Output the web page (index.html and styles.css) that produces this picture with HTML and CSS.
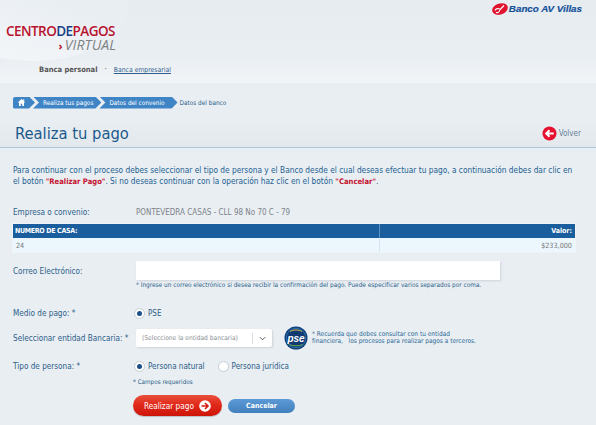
FILE: index.html
```html
<!DOCTYPE html>
<html lang="es">
<head>
<meta charset="utf-8">
<title>Realiza tu pago</title>
<link rel="stylesheet" href="styles.css">
</head>
<body>
<header class="top">
  <div class="swoosh"></div>
  <div class="brand-row">
    <div class="logo">
      <div class="logo-main">CENTRO<span class="logo-de">DE</span>PAGOS</div>
      <div class="logo-sub"><span class="logo-arrow">›</span>VIRTUAL</div>
    </div>
    <div class="bank">
      <svg class="bank-icon" viewBox="0 0 16 12" width="16" height="12"><ellipse cx="8" cy="6" rx="8" ry="5.4" fill="#e1122d" transform="rotate(-18 8 6)"/><path d="M3 7.5c1-2 3.500-2.500 4.500-1.500M4 9.500c2 .5 3.500-.5 4-3l4-4" fill="none" stroke="#fff" stroke-width="1.200"/></svg>
      <span>Banco AV Villas</span>
    </div>
  </div>
  <nav class="nav"><b>Banca personal</b><span class="nav-dot">·</span><a href="#">Banca empresarial</a></nav>
</header>
<main class="page">
  <div class="crumbs">
    <span class="crumb crumb-home"><svg viewBox="0 0 10 10" width="9" height="9"><path d="M5 1 .8 5h1.400v4h2V6.500h1.600V9h2V5h1.400L8 3.800V1.500H7v1.300z" fill="#fff"/></svg></span>
    <span class="crumb">Realiza tus pagos</span>
    <span class="crumb crumb-last">Datos del convenio</span>
    <span class="crumb-text">Datos del banco</span>
  </div>
  <div class="title-row">
    <h1>Realiza tu pago</h1>
    <a class="back" href="#">
      <svg viewBox="0 0 16 16" width="15" height="15"><circle cx="8" cy="8" r="7.500" fill="#e5112e"/><path d="M12.500 8H5M8 4.500 4.500 8 8 11.500" fill="none" stroke="#fff" stroke-width="2.200"/></svg>
      <span>Volver</span>
    </a>
  </div>
  <p class="intro">Para continuar con el proceso debes seleccionar el tipo de persona y el Banco desde el cual deseas efectuar tu pago, a continuación debes dar clic en el botón <b>"Realizar Pago"</b>. Si no deseas continuar con la operación haz clic en el botón <b>"Cancelar"</b>.</p>
  <div class="row row-company"><label class="lbl">Empresa o convenio:</label><span class="val">PONTEVEDRA CASAS - CLL 98 No 70 C - 79</span></div>
  <div class="tbl">
    <div class="th th-l">NUMERO DE CASA:</div><div class="th th-r">Valor:</div>
    <div class="td">24</div><div class="td td-r">$233,000</div>
  </div>
  <div class="row row-mail">
    <label class="lbl">Correo Electrónico:</label>
    <div class="mail-col">
      <div class="input"></div>
      <div class="hint">* Ingrese un correo electrónico si desea recibir la confirmación del pago. Puede especificar varios separados por coma.</div>
    </div>
  </div>
  <div class="row row-medio"><label class="lbl">Medio de pago: *</label><span class="radio on"></span><span class="opt">PSE</span></div>
  <div class="row row-bank">
    <label class="lbl">Seleccionar entidad Bancaria: *</label>
    <div class="select"><span class="sel-text">(Seleccione la entidad bancaria)</span><span class="sel-arrow"><svg viewBox="0 0 8 5" width="7" height="5"><path d="M1 1l3 3 3-3" fill="none" stroke="#444" stroke-width="1"/></svg></span></div>
    <svg class="pse" viewBox="0 0 24 24" width="24" height="24"><circle cx="12" cy="12" r="11.500" fill="#0e3f7a"/><circle cx="12" cy="12" r="9.800" fill="#123a72" stroke="#2f7fb5" stroke-width=".8"/><path d="M6 5.500c3-2 9-2 12 0" fill="none" stroke="#e6c44a" stroke-width="1"/><path d="M5.500 18.500c3.500 1.800 9.500 1.800 13 0" fill="none" stroke="#6fb24a" stroke-width="1"/><text x="12" y="15.500" text-anchor="middle" class="pse-text">pse</text></svg>
    <div class="note">* Recuerda que debes consultar con tu entidad<br>financiera, &nbsp; los procesos para realizar pagos a terceros.</div>
  </div>
  <div class="row row-tipo"><label class="lbl">Tipo de persona: *</label><span class="radio on"></span><span class="opt opt-gap">Persona natural</span><span class="radio"></span><span class="opt">Persona jurídica</span></div>
  <div class="req">* Campos requeridos</div>
  <div class="btns">
    <a class="btn-red" href="#">Realizar pago<svg viewBox="0 0 12 12" width="12" height="12"><circle cx="6" cy="6" r="5.800" fill="#fff"/><path d="M2.500 6h6M6 3l3 3-3 3" fill="none" stroke="#d81e14" stroke-width="1.700"/></svg></a>
    <a class="btn-blue" href="#">Cancelar</a>
  </div>
</main>
</body>
</html>
```
FILE: styles.css
```css
html, body { margin: 0; padding: 0; }
body {
  width: 596px; height: 425px; overflow: hidden;
  background: #e9eef3;
  font-family: "DejaVu Sans Condensed", "DejaVu Sans", Verdana, sans-serif;
  font-stretch: condensed;
  color: #2c5f8a;
  font-size: 8px;
}
a { text-decoration: none; color: inherit; }
.top {
  position: relative; height: 82px; overflow: hidden;
  background: linear-gradient(180deg, #e7ecf1 0%, #e9eef2 70%, #f1f4f7 100%);
  border-bottom: 1px solid #f3f5f8;
}
.swoosh {
  position: absolute; left: -60px; top: -42px; width: 188px; height: 103px;
  border-radius: 50%;
  background: linear-gradient(200deg, #e9eef3 40%, #f6f8fa 100%);
}
.brand-row { position: relative; display: flex; justify-content: space-between; align-items: flex-start; padding: 3px 14px 0 6px; height: 47px; }
.logo { margin-top: 22px; width: 110px; }
.logo-main { font: 600 13.500px/13px "Open Sans", sans-serif; font-stretch: normal; color: #b8122e; letter-spacing: -.55px; white-space: nowrap; }
.logo-de { color: #173f84; }
.logo-sub { font: italic 400 14px/14px "Open Sans", sans-serif; font-stretch: normal; color: #7d8285; text-align: right; letter-spacing: .1px; white-space: nowrap; }
.logo-arrow { color: #b8122e; font-style: normal; font-weight: 700; margin-right: 2px; font-size: 11px; }
.bank { display: flex; align-items: center; gap: 1px; font: italic 700 9.800px/12px "Liberation Sans", sans-serif; font-stretch: normal; color: #16529a; -webkit-text-stroke: .2px #16529a; }
.bank-icon { display: block; }
.nav { position: relative; display: flex; align-items: center; padding: 15px 0 0 39px; font-size: 8px; line-height: 10px; color: #555; white-space: nowrap; }
.nav b { font-weight: 700; font-size: 7.500px; }
.nav-dot { margin: 0 7px 0 7px; }
.nav a { color: #2f5f90; text-decoration: underline; font-size: 6.800px; }
.page { padding: 13px 21px 0 13px; }
.crumbs { display: flex; align-items: center; height: 13px; color: #fff; font-size: 6.400px; white-space: nowrap; }
.crumb {
  height: 12px; line-height: 10px; background: #3f85c6;
  display: flex; align-items: center; padding: 0 8px 0 10px;
  margin-right: -2px;
  clip-path: polygon(0 0, calc(100% - 6px) 0, 100% 50%, calc(100% - 6px) 100%, 0 100%, 6px 50%);
}
.crumb-home { clip-path: polygon(0 0, calc(100% - 6px) 0, 100% 50%, calc(100% - 6px) 100%, 0 100%); border-radius: 2px 0 0 2px; padding: 0 9px 0 4px; }
.crumb-last { padding-right: 13px; }
.crumb-text { color: #2c5f8a; margin-left: 4px; }
.title-row { display: flex; justify-content: space-between; align-items: center; height: 27px; margin: 11px -21px 0 -13px; padding: 0 15px 0 15px; border-bottom: 1px solid #a9c6dd; background: linear-gradient(180deg, #e9eef3, #e3e8ed); }
h1 { margin: 0; font: 400 16.400px/22px "DejaVu Sans Condensed", "DejaVu Sans", sans-serif; font-stretch: condensed; color: #1c5a8c; }
.back { display: flex; align-items: center; gap: 2px; font-size: 8px; color: #6a8096; }
.intro { margin: 17px 0 0; font-size: 8.250px; line-height: 10.500px; color: #235f90; width: 563px; }
.intro b { color: #c5122f; font-size: 7.600px; }
.row { display: flex; align-items: center; white-space: nowrap; }
.lbl { width: 121px; margin-right: 2px; flex: none; font-size: 8.150px; color: #2c6088; }
.val { color: #7c8287; font-size: 8px; }
.row-company { margin-top: 20px; height: 10px; }
.tbl { margin-top: 7px; width: 562px; display: grid; grid-template-columns: 367px 195px; grid-template-rows: 14px 14px; font-size: 7px; outline: 1px solid #f1f4f7; }
.th { background: #1b5e9d; color: #fff; font-weight: 700; display: flex; align-items: center; padding: 0 3px; }
.th-l { border-right: 1px solid #5a93c4; padding-left: 2px; letter-spacing: -.3px; }
.th-r { justify-content: flex-end; }
.td { background: #ebf6fd; color: #777; display: flex; align-items: center; padding: 0 3px; font-size: 7.200px; }
.td:nth-child(3) { border-right: 1px solid #d5e6f2; }
.td-r { justify-content: flex-end; }
.row-mail { margin-top: 9px; align-items: flex-start; }
.row-mail .lbl { margin-top: 5px; }
.input { width: 364px; height: 19px; background: #fff; box-shadow: 1px 1px 2px #cdd3d9; }
.hint { font-size: 6.450px; line-height: 8px; margin-top: 1px; color: #2c5f8a; }
.row-medio { margin-top: 18px; height: 12px; }
.radio { width: 9px; height: 9px; margin: 0 3px 0 -2px; flex: none; border-radius: 50%; background: #fff; border: 1px solid #c4ccd4; position: relative; }
.radio.on::after { content: ""; position: absolute; left: 2px; top: 2px; width: 5px; height: 5px; border-radius: 50%; background: #1b4f8a; }
.opt { font-size: 8px; color: #2c6088; }
.opt-gap { margin-right: 15px; }
.row-bank { margin-top: 7px; height: 24px; }
.select { width: 136px; height: 18px; flex: none; background: #fff; display: flex; align-items: center; box-shadow: 1px 1px 2px #cdd3d9; border-radius: 2px; }
.sel-text { width: 116px; padding-left: 6px; font-size: 6.600px; color: #8a8f94; box-sizing: border-box; overflow: hidden; }
.sel-arrow { flex: 1; height: 11px; border-left: 1px solid #dcdfe3; display: flex; align-items: center; justify-content: center; }
.pse { margin-left: 12px; flex: none; }
.pse-text { font: italic 700 10px "Liberation Sans", sans-serif; font-stretch: normal; fill: #fff; }
.note { margin-left: 4px; font-size: 6.500px; line-height: 7.500px; color: #2c6a96; }
.row-tipo { margin-top: 10px; height: 12px; }
.req { margin: 5px 0 0 120px; font-size: 6.300px; line-height: 9px; color: #2c5f8a; }
.btns { margin: 9px 0 0 120px; display: flex; align-items: center; gap: 6px; }
.btn-red { width: 89px; height: 21px; border-radius: 11px; background: linear-gradient(180deg, #e8503a 0%, #e22a1c 45%, #cc1408 100%); color: #fff; font-size: 8.200px; display: flex; align-items: center; justify-content: center; gap: 5px; white-space: nowrap; box-shadow: 0 1px 1px #b9c0c6; }
.btn-blue { width: 67px; height: 14px; border-radius: 7px; background: linear-gradient(180deg, #5b9ad6, #4180bd); color: #fff; font-size: 7px; font-weight: 700; display: flex; align-items: center; justify-content: center; }
```
